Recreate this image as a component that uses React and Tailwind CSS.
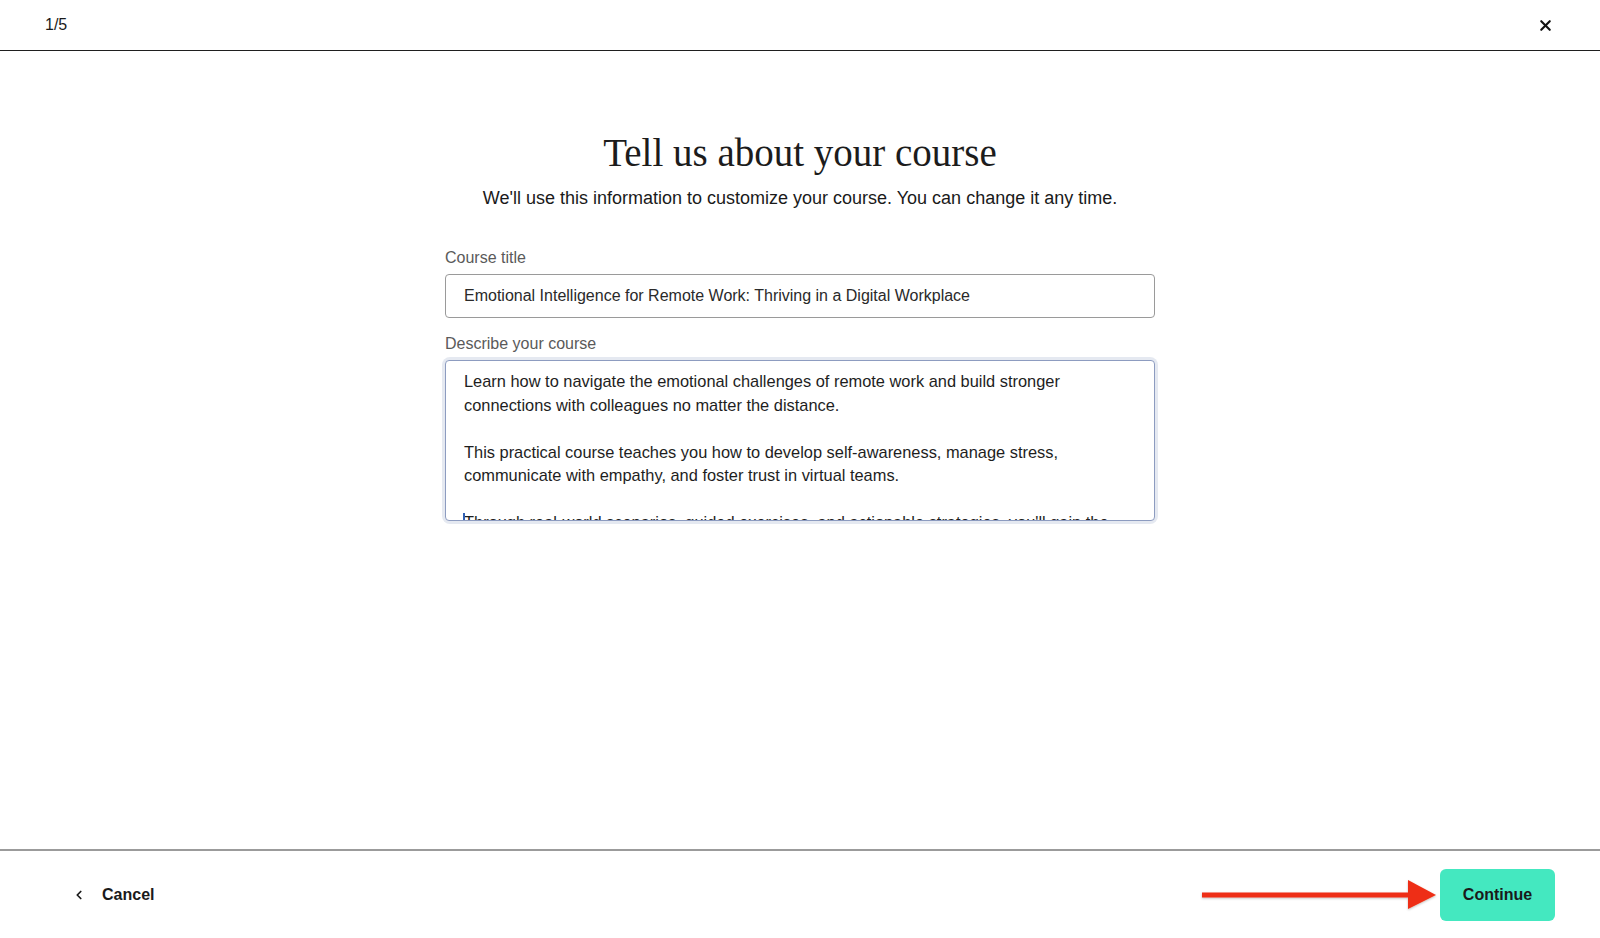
import { ChevronLeft, X } from "lucide-react";

const description = [
  "Learn how to navigate the emotional challenges of remote work and build stronger connections with colleagues no matter the distance.",
  "This practical course teaches you how to develop self-awareness, manage stress, communicate with empathy, and foster trust in virtual teams.",
  "Through real-world scenarios, guided exercises, and actionable strategies, you'll gain the tools to thrive in a digital workplace.",
];

function RedArrow() {
  return (
    <svg width="240" height="34" viewBox="0 0 240 34" className="mr-[1px]">
      <defs>
        <filter id="sh" x="-10%" y="-50%" width="120%" height="200%">
          <feDropShadow dx="0" dy="1" stdDeviation="1" floodColor="#000" floodOpacity="0.25" />
        </filter>
      </defs>
      <g filter="url(#sh)">
        <rect x="3" y="14.5" width="210" height="5" fill="#ee2f16" />
        <polygon points="209,2 237,17 209,31" fill="#ee2f16" />
      </g>
    </svg>
  );
}

export default function App() {
  return (
    <div className="flex flex-col h-screen bg-white text-[#1a1a1a]" style={{ fontFamily: '"Liberation Sans", Arial, sans-serif' }}>
      {/* top bar */}
      <div className="flex items-center justify-between h-[51px] border-b-[1.5px] border-[#1f1f1f] pl-[45px] pr-[46px]">
        <span className="text-[16px]">1/5</span>
        <X size={17} strokeWidth={3} className="text-[#111]" />
      </div>

      {/* form */}
      <div className="flex-1 flex flex-col items-center pt-[79px]">
        <h1 className="text-[39px] leading-[46px] text-[#1c1c1c]" style={{ fontFamily: '"Liberation Serif", "Times New Roman", serif' }}>
          Tell us about your course
        </h1>
        <p className="mt-[10px] text-[18px] leading-[24px] text-[#1a1a1a]">
          We'll use this information to customize your course. You can change it any time.
        </p>

        <div className="w-[710px] mt-[38px]">
          <label className="block text-[16px] leading-[20px] text-[#5a5a5a]">Course title</label>
          <div className="mt-[6px] h-[44px] flex items-center px-[18px] border border-[#9a9a9a] rounded-[4px] text-[16px] text-[#2a2a2a]">
            Emotional Intelligence for Remote Work: Thriving in a Digital Workplace
          </div>

          <label className="block mt-[16px] text-[16px] leading-[20px] text-[#5a5a5a]">Describe your course</label>
          <div className="mt-[6px] rounded-[5px] ring-[3px] ring-[#e5e9f1]">
            <div className="h-[161px] overflow-hidden border border-[#8d9cc0] rounded-[4px] pl-[18px] pr-[40px] pt-[9px] text-[16.4px] leading-[23.5px] text-[#1e1e1e]">
              {description.map((para, i) => (
                <p key={i} className={i > 0 ? "mt-[23.5px] relative" : "relative"}>
                  {i === 2 && <span className="absolute left-[-1px] top-[2px] w-[2px] h-[18px] bg-[#2f5fb3]" />}
                  {para}
                </p>
              ))}
            </div>
          </div>
        </div>
      </div>

      {/* bottom bar */}
      <div className="flex items-center justify-between h-[89px] border-t-2 border-[#9b9b9b] pl-[72px] pr-[45px]">
        <button className="flex items-center gap-[16px] text-[16px] font-bold">
          <ChevronLeft size={14} strokeWidth={3} />
          <span>Cancel</span>
        </button>
        <div className="flex items-center">
          <RedArrow />
          <button className="w-[115px] h-[52px] rounded-[6px] bg-[#44e8c0] text-[16px] font-bold text-[#1a1a1a]">
            Continue
          </button>
        </div>
      </div>
    </div>
  );
}
